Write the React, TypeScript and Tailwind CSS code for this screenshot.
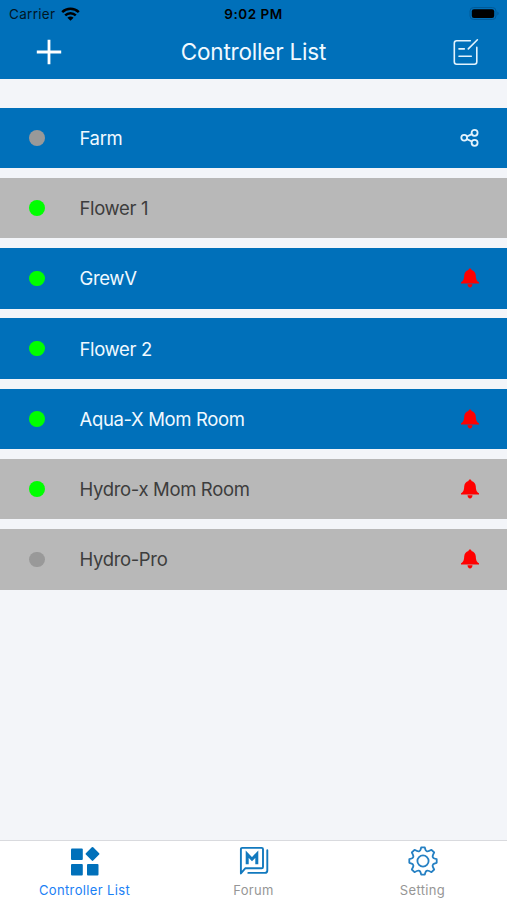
import React from "react";

type Controller = {
  name: string;
  online: boolean;
  active: boolean;
  badge?: "share" | "alarm";
};

const controllers: Controller[] = [
  { name: "Farm", online: false, active: true, badge: "share" },
  { name: "Flower 1", online: true, active: false },
  { name: "GrewV", online: true, active: true, badge: "alarm" },
  { name: "Flower 2", online: true, active: true },
  { name: "Aqua-X Mom Room", online: true, active: true, badge: "alarm" },
  { name: "Hydro-x Mom Room", online: true, active: false, badge: "alarm" },
  { name: "Hydro-Pro", online: false, active: false, badge: "alarm" },
];

function WifiIcon() {
  return (
    <svg className="ml-1.5 h-[14px] w-[19px]" viewBox="0 0 19 14" fill="none" stroke="#000" strokeWidth="2.5">
      <path d="M1.2 5.2C5.8 .7 13.2 .7 17.8 5.2" />
      <path d="M4.2 8.4C7.2 5.5 11.8 5.5 14.8 8.4" />
      <path d="M9.5 13.8 6.4 10.7C8.1 9.1 10.9 9.1 12.6 10.7Z" fill="#000" stroke="none" />
    </svg>
  );
}

function BatteryIcon() {
  return (
    <svg className="h-[13px] w-[30px]" viewBox="0 0 30 13">
      <rect x="1" y=".5" width="26" height="12" rx="3.6" fill="none" stroke="#005a98" />
      <rect x="2.8" y="2.2" width="22.4" height="8.8" rx="2.2" fill="#000" />
      <path d="M28.4 4.6c1.6.6 1.6 3.2 0 3.8z" fill="#005a98" />
    </svg>
  );
}

function EditIcon() {
  return (
    <svg
      className="h-[28px] w-[26px]"
      viewBox="0 0 26 28"
      fill="none"
      stroke="#e3f3fd"
      strokeWidth="1.6"
      strokeLinecap="round"
    >
      <path d="M17.3 2.8H3.7Q1.3 2.8 1.3 5.2V23.8Q1.3 26.2 3.7 26.2H21.4Q23.8 26.2 23.8 23.8V9.4" />
      <path d="M15.3 10.9 24.4 1.8M6 10.9H11.3M6 18.3H18.3" />
    </svg>
  );
}

function ShareIcon() {
  return (
    <svg className="h-5 w-5" viewBox="0 0 20 20" fill="none" stroke="#e3f3fd" strokeWidth="1.8">
      <circle cx="4.2" cy="9.8" r="2.9" />
      <circle cx="14.6" cy="4.8" r="3" />
      <circle cx="14.6" cy="14.8" r="3" />
      <path d="m7 8.5 4.8-2.4M7 11.1l4.8 2.4" />
    </svg>
  );
}

function BellIcon() {
  return (
    <svg className="h-5 w-5" viewBox="0 0 20 20" fill="#f00">
      <path d="M10 .5C9.1.5 8.6 1.1 8.5 1.9 5.9 2.6 4.4 4.7 4.2 7.4 4 10.6 3.8 12.5 1 14.2V15.6H19V14.2C16.2 12.5 16 10.6 15.8 7.4 15.6 4.7 14.1 2.6 11.5 1.9 11.4 1.1 10.9.5 10 .5Z" />
      <path d="M7.5 16.2H12.5C12.4 18.2 11.5 19.4 10 19.4S7.6 18.2 7.5 16.2Z" />
    </svg>
  );
}

function ListIcon() {
  return (
    <svg className="h-[30px] w-[30px]" viewBox="0 0 30 30" fill="#0070ba">
      <rect x="1" y="2.5" width="11.8" height="11.5" rx="1" />
      <rect x="1" y="18" width="11.8" height="11.5" rx="1" />
      <rect x="17" y="18" width="11.5" height="11.5" rx="1" />
      <rect x="17.3" y="2.7" width="10.4" height="10.4" rx="1" transform="rotate(45 22.5 7.9)" />
    </svg>
  );
}

function ForumIcon() {
  return (
    <svg className="h-[30px] w-[30px]" viewBox="0 0 30 30" fill="none" stroke="#1279be" strokeWidth="1.9">
      <path d="M3.2 1.9H22.7Q24 1.9 24 3.2V21Q24 22.3 22.7 22.3H6.2L1.9 27.4V3.2Q1.9 1.9 3.2 1.9Z" strokeLinejoin="round" />
      <path d="M28.3 4.2V24.5Q28.3 26.9 25.9 26.9H9.3" strokeLinecap="round" />
      <path d="M8.2 18.2V8.2L13 13.2 17.8 8.2V18.2" strokeWidth="3" />
    </svg>
  );
}

function GearIcon() {
  return (
    <svg
      className="h-[30px] w-[30px]"
      viewBox="0 0 30 30"
      fill="none"
      stroke="#2580c3"
      strokeWidth="1.8"
      strokeLinejoin="round"
    >
      <circle cx="15" cy="15" r="5.6" />
      <path d="M13.2 1.3H16.8Q17.4 4.7 19 5.3 20.2 5.8 23.5 3.8L26.2 6.5Q24.2 9.8 24.7 11 25.3 12.6 28.7 13.2V16.8Q25.3 17.4 24.7 19 24.2 20.2 26.2 23.5L23.5 26.2Q20.2 24.2 19 24.7 17.4 25.3 16.8 28.7H13.2Q12.6 25.3 11 24.7 9.8 24.2 6.5 26.2L3.8 23.5Q5.8 20.2 5.3 19 4.7 17.4 1.3 16.8V13.2Q4.7 12.6 5.3 11 5.8 9.8 3.8 6.5L6.5 3.8Q9.8 5.8 11 5.3 12.6 4.7 13.2 1.3Z" />
    </svg>
  );
}

function ControllerRow({ name, online, active, badge }: Controller) {
  return (
    <li
      className={`flex h-[60.5px] items-center pr-[27px] pl-[29px] ${
        active ? "bg-[#0070ba] text-[#f0f9ff]" : "bg-[#b8b8b8] text-[#3d3d3d]"
      }`}
    >
      <span className={`size-[15.5px] rounded-full ${online ? "bg-[#0f0]" : "bg-[#999]"}`} />
      <span className="ml-[35px] flex-1 text-[18.5px] leading-6 tracking-[-0.35px]">{name}</span>
      {badge === "share" && <ShareIcon />}
      {badge === "alarm" && <BellIcon />}
    </li>
  );
}

function Tab(props: { label: string; icon: React.ReactNode; selected?: boolean }) {
  return (
    <button
      className={`flex flex-col items-center pt-[5px] text-[13px] leading-4 tracking-[0.35px] ${
        props.selected ? "text-[#1b80f5]" : "text-[#969696]"
      }`}
    >
      {props.icon}
      <span className="mt-[6px]">{props.label}</span>
    </button>
  );
}

export default function App() {
  return (
    <div className="flex h-[900px] w-[507px] flex-col overflow-hidden bg-[#f3f5f9] font-['Inter',sans-serif]">
      <header className="h-[79px] bg-[#0070ba]">
        <div className="grid h-[27px] grid-cols-3 items-center px-[8px] text-[13.5px] leading-4 text-[#001625]">
          <div className="flex items-center pl-px tracking-[0.3px]">
            Carrier
            <WifiIcon />
          </div>
          <div className="text-center font-semibold tracking-[0.5px] text-black">9:02 PM</div>
          <div className="flex justify-end">
            <BatteryIcon />
          </div>
        </div>
        <div className="grid h-[50px] grid-cols-[1fr_auto_1fr] items-center pr-[28px] pl-[28px]">
          <svg className="ml-[8px] h-[26px] w-[26px]" viewBox="0 0 26 26" stroke="#fff" strokeWidth="2.8">
            <path d="M13 .8V25.2M.8 13H25.2" />
          </svg>
          <h1 className="text-[22.5px] tracking-[-0.2px] text-[#f0f9ff]">Controller List</h1>
          <div className="flex justify-end">
            <EditIcon />
          </div>
        </div>
      </header>

      <ul className="mt-[28.5px] flex flex-1 flex-col gap-[9.75px]">
        {controllers.map((item) => (
          <ControllerRow key={item.name} {...item} />
        ))}
      </ul>

      <nav className="grid h-[60px] grid-cols-3 border-t border-[#d9dade] bg-white">
        <Tab label="Controller List" icon={<ListIcon />} selected />
        <Tab label="Forum" icon={<ForumIcon />} />
        <Tab label="Setting" icon={<GearIcon />} />
      </nav>
    </div>
  );
}
